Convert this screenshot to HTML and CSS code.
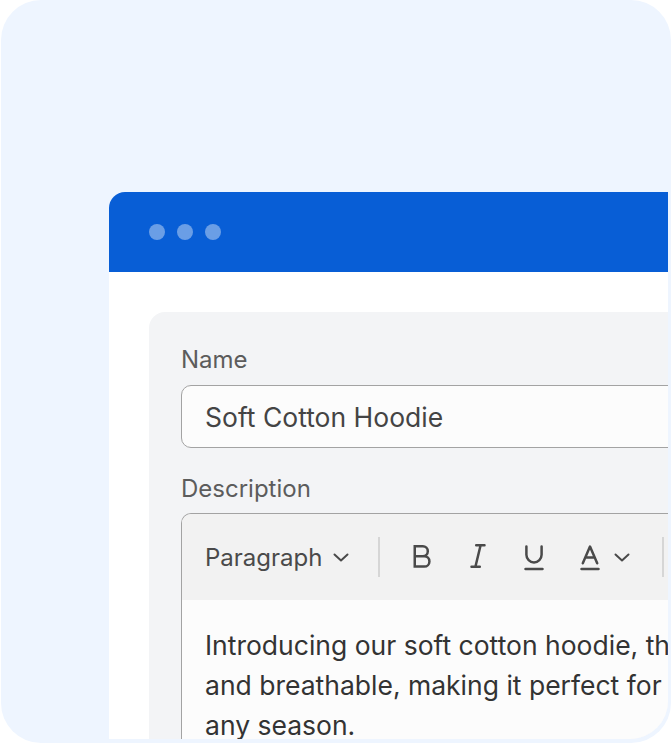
FILE: index.html
```html
<!DOCTYPE html>
<html lang="en">
<head>
<meta charset="utf-8">
<title>Product editor</title>
<link rel="stylesheet" href="styles.css">
</head>
<body>
<div class="frame">
  <div class="clip">
    <div class="window">
      <div class="titlebar">
        <span class="dot"></span><span class="dot"></span><span class="dot"></span>
      </div>
      <div class="window-body">
        <div class="panel">
          <label class="label">Name</label>
          <div class="input">Soft Cotton Hoodie</div>
          <label class="label label-desc">Description</label>
          <div class="editor">
            <div class="toolbar">
              <span class="para">Paragraph</span>
              <svg class="chev chev-para" width="16" height="10" viewBox="0 0 16 10"><polyline points="1.5,1.5 8,7.5 14.5,1.5" fill="none" stroke="#4a4a4a" stroke-width="2" stroke-linecap="round" stroke-linejoin="round"/></svg>
              <span class="sep"></span>
              <svg class="ico ico-b" width="32" height="32" viewBox="0 0 32 32"><path d="M8.75 5.25V25.5M8.75 5.25H16.8a5 5 0 0 1 0 10H8.75M8.75 15.25H18.3a5.1 5.1 0 0 1 0 10.25H8.75" fill="none" stroke="#4a4a4a" stroke-width="2.5" stroke-linejoin="round" stroke-linecap="square"/></svg>
              <svg class="ico" width="32" height="32" viewBox="0 0 32 32"><path d="M14.2 4.3H22.5M9.5 25.7H17.8M18.6 4.3L13.4 25.7" fill="none" stroke="#4a4a4a" stroke-width="2.5" stroke-linecap="round"/></svg>
              <svg class="ico" width="32" height="32" viewBox="0 0 32 32"><path d="M8.4 5.5V13.8a7.6 7.6 0 0 0 15.2 0V5.5M7.5 28H24.5" fill="none" stroke="#4a4a4a" stroke-width="2.5" stroke-linecap="round"/></svg>
              <svg class="ico" width="32" height="32" viewBox="0 0 32 32"><path d="M8.8 22.3L16 5.6L23.2 22.3M11.4 16.4H20.6M7.5 28H24.5" fill="none" stroke="#4a4a4a" stroke-width="2.5" stroke-linecap="round" stroke-linejoin="round"/></svg>
              <svg class="chev chev-a" width="16" height="10" viewBox="0 0 16 10"><polyline points="1.5,1.5 8,7.5 14.5,1.5" fill="none" stroke="#4a4a4a" stroke-width="2" stroke-linecap="round" stroke-linejoin="round"/></svg>
              <span class="sep sep-end"></span>
            </div>
            <p class="content">Introducing our soft cotton hoodie, the<br>and breathable, making it perfect for<br>any season.</p>
          </div>
        </div>
      </div>
    </div>
  </div>
</div>
</body>
</html>
```

FILE: styles.css
```css
* { box-sizing: border-box; }

html, body {
  margin: 0;
  padding: 0;
  background: #ffffff;
}

body {
  font-family: Inter, "Noto Sans", "Liberation Sans", sans-serif;
}

.frame {
  width: 670px;
  height: 743px;
  margin-left: 1px;
  border-radius: 40px;
  background: #eef5ff;
  padding: 0 3px 4px 0;
}

.clip {
  width: 100%;
  height: 100%;
  border-radius: 38px;
  overflow: hidden;
  padding: 192px 0 0 108px;
}

.window {
  width: 620px;
  height: 600px;
  background: #ffffff;
  border-top-left-radius: 16px;
  overflow: hidden;
}

.titlebar {
  height: 80px;
  background: #085ed6;
  display: flex;
  align-items: center;
  gap: 12px;
  padding-left: 40px;
}

.dot {
  width: 16px;
  height: 16px;
  border-radius: 50%;
  background: rgba(255, 255, 255, 0.4);
}

.window-body {
  padding: 40px 0 0 40px;
}

.panel {
  width: 600px;
  height: 500px;
  background: #f3f4f6;
  border-top-left-radius: 16px;
  padding: 33px 0 0 32px;
  display: flex;
  flex-direction: column;
}

.label {
  display: block;
  font-size: 24px;
  line-height: 30px;
  color: #5c5c5c;
  margin-bottom: 10px;
}

.label-desc {
  margin-top: 26px;
  margin-bottom: 9px;
}

.input {
  flex: none;
  height: 63px;
  border: 1px solid #a3a3a3;
  border-radius: 10px 0 0 10px;
  background: #fcfcfc;
  display: flex;
  align-items: center;
  padding-left: 23px;
  font-size: 26.5px;
  color: #444444;
}

.editor {
  border: 1px solid #a3a3a3;
  border-radius: 10px 0 0 0;
  border-bottom: none;
  overflow: hidden;
  flex: 1;
}

.toolbar {
  height: 86px;
  background: #f2f2f2;
  display: flex;
  align-items: center;
  padding-left: 23px;
}

.para {
  font-size: 24px;
  color: #4a4a4a;
}

.chev { flex: none; }

.chev-para { margin-left: 11px; margin-top: 2px; }

.sep {
  flex: none;
  width: 2px;
  height: 40px;
  background: #d6d6d6;
  margin-left: 29px;
  margin-right: 26px;
}

.ico {
  flex: none;
  margin-right: 24px;
}

.chev-a {
  margin-left: -16px;
  margin-top: 2px;
}

.sep-end {
  margin-left: 32px;
}

.content {
  margin: 0;
  background: #fcfcfc;
  padding: 25px 24px 40px 23px;
  font-size: 26.5px;
  line-height: 40px;
  color: #333333;
  white-space: nowrap;
  height: 200px;
}
```
